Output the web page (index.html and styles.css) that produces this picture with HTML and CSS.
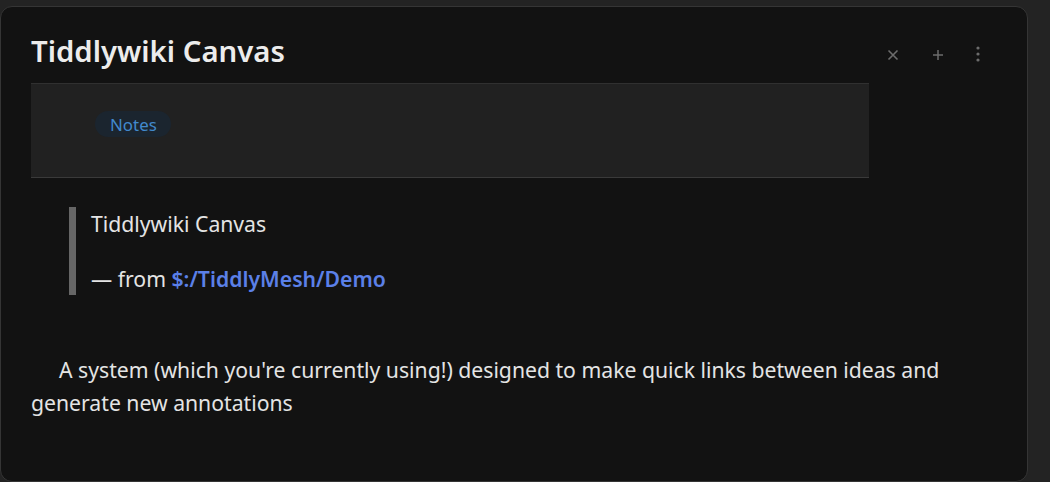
FILE: index.html
```html
<!DOCTYPE html>
<html lang="en">

<head>
    <meta charset="UTF-8">
    <meta name="viewport" content="width=device-width, initial-scale=1.0">
    <title>Tiddlywiki Canvas</title>
    <link rel="stylesheet" href="styles.css">
</head>

<body>
    <div class="tiddler">
        <div class="tiddlerhead">
            <h2 class="title">Tiddlywiki Canvas</h2>
            <div class="controls">
                <span class="ctrl ctrlclose">
                    <svg width="12" height="12" viewBox="0 0 12 12">
                        <path d="M1.5 1.5 L10.5 10.5 M10.5 1.5 L1.5 10.5" stroke="#6c6c6c" stroke-width="1.6" />
                    </svg>
                </span>
                <span class="ctrl ctrladd">
                    <svg width="12" height="12" viewBox="0 0 12 12">
                        <path d="M6 1 V11 M1 6 H11" stroke="#6c6c6c" stroke-width="1.5" />
                    </svg>
                </span>
                <span class="ctrl ctrlmore">
                    <svg width="4" height="16" viewBox="0 0 4 16">
                        <circle cx="2" cy="2" r="1.6" fill="#6c6c6c" />
                        <circle cx="2" cy="8" r="1.6" fill="#6c6c6c" />
                        <circle cx="2" cy="14" r="1.6" fill="#6c6c6c" />
                    </svg>
                </span>
            </div>
        </div>

        <div class="tagbar">
            <span class="tag">Notes</span>
        </div>

        <div class="tiddlerbody">
            <blockquote class="quote">
                <p>Tiddlywiki Canvas</p>
                <p>— from <a class="link" href="#">$:/TiddlyMesh/Demo</a></p>
            </blockquote>
            <p class="desc">A system (which you're currently using!) designed to make quick links between ideas and generate new annotations</p>
        </div>
    </div>
</body>

</html>
```

FILE: styles.css
```css
body {
    margin: 0;
    padding-top: 6px;
    background-color: #232323;
    font-family: "Segoe UI", "Noto Sans", sans-serif;
    color: #e4e4e4;
}

.tiddler {
    width: 966px;
    height: 444px;
    padding: 0 30px 30px;
    background-color: #121212;
    border: 1px solid #353535;
    border-radius: 12px;
}

.tiddlerhead {
    display: flex;
    align-items: center;
    height: 76px;
}

.title {
    margin: 0;
    width: 838px;
    font-size: 29.3px;
    font-weight: 600;
    color: #ececec;
    padding-top: 12px;
}

.controls {
    display: flex;
    align-items: center;
    padding-top: 20px;
    margin-left: 14px;
}

.ctrl {
    display: flex;
    justify-content: center;
    align-items: center;
    width: 20px;
    height: 20px;
}

.ctrladd {
    margin-left: 25px;
}

.ctrlmore {
    margin-left: 20px;
    margin-top: -3px;
}

.tagbar {
    width: 838px;
    height: 93px;
    background-color: #212121;
    border-top: 1px solid #303030;
    border-bottom: 1px solid #3a3a3a;
}

.tag {
    display: inline-block;
    margin: 27px 0 0 64px;
    padding: 0 14px 0 15px;
    height: 26px;
    line-height: 28px;
    border-radius: 13px;
    background-color: #1b252f;
    color: #4289cc;
    font-size: 16.9px;
}

.quote {
    margin: 29px 0 0 38px;
    padding: 2px 0 1px 15px;
    border-left: 7px solid #666666;
    font-size: 21.2px;
}

.quote p {
    margin: 0 0 25px;
    line-height: 30px;
}

.quote p:last-child {
    margin-bottom: 0;
}

.link {
    color: #5b80e8;
    font-weight: 600;
    text-decoration: none;
}

.desc {
    margin: 58px 0 0;
    font-size: 21.2px;
    line-height: 33px;
    text-indent: 28px;
}
```
